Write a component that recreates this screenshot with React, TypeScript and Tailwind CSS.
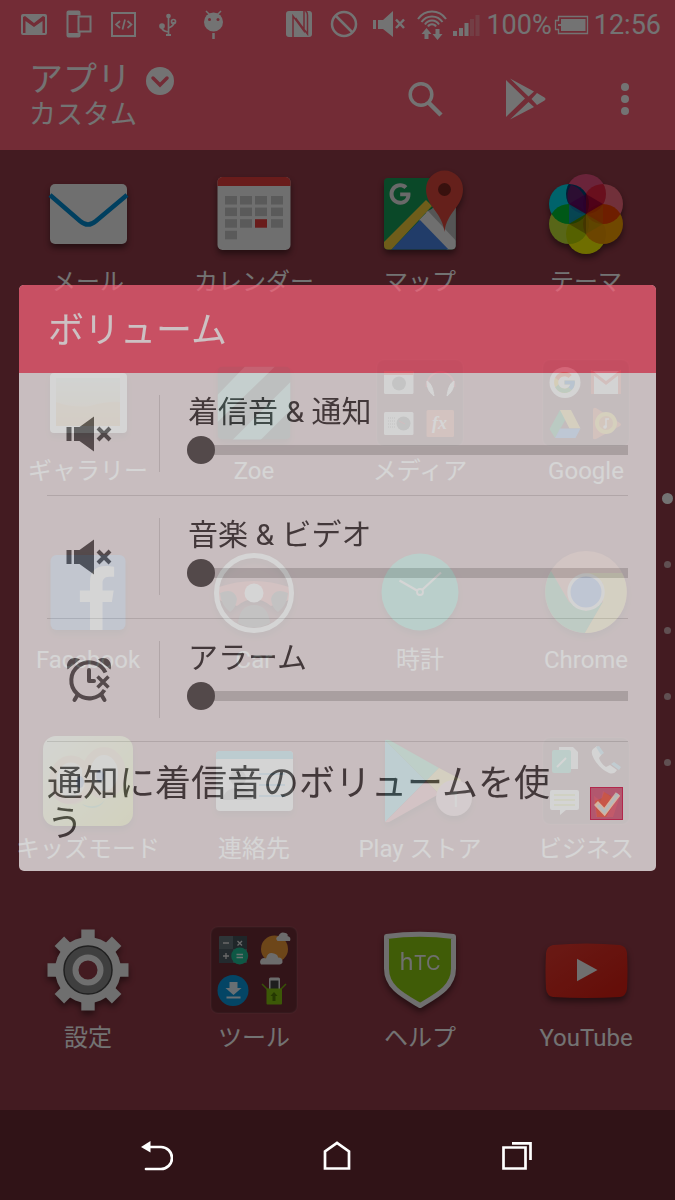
import { useState, type ReactNode } from "react";
import { FaFacebookF, FaGoogle } from "react-icons/fa";
import { FcGoogle } from "react-icons/fc";

const FONT = "font-[Roboto,'Noto_Sans_CJK_JP',sans-serif]";

/* ---------- status bar ---------- */

function StatusBar() {
  return (
    <div className="flex h-12 items-center pt-px pr-[14px] pl-5 text-white">
      <svg className="h-[30px] w-7 shrink-0" viewBox="0 0 28 30" fill="currentColor">
        <path fillRule="evenodd" d="M3 4h22a2 2 0 0 1 2 2v17a2 2 0 0 1-2 2H3a2 2 0 0 1-2-2V6a2 2 0 0 1 2-2Zm0 3v16h2.500V11l8.500 6 8.500-6v12H25V7l-2-1-9 7-9-7Z" />
      </svg>
      <svg className="ml-[17px] h-[30px] w-7 shrink-0" viewBox="0 0 28 30" fill="none" stroke="currentColor">
        <path d="M14.500 5.500v-3a1 1 0 0 0-1-1h-10a1 1 0 0 0-1 1v23a1 1 0 0 0 1 1h10a1 1 0 0 0 1-1V22" strokeWidth="2" />
        <path d="M2 3h13M2 25h13" strokeWidth="4" />
        <rect x="13.500" y="6.500" width="12" height="15" strokeWidth="2" />
      </svg>
      <svg className="ml-[17px] h-[30px] w-7 shrink-0" viewBox="0 0 28 30" fill="none" stroke="currentColor">
        <rect x="2" y="3" width="23" height="23" strokeWidth="2" />
        <path d="m10 11-4 3.500 4 3.500M17.500 11l4 3.500-4 3.500M15 9.500l-2.500 10" strokeWidth="1.700" />
      </svg>
      <svg className="ml-[17px] h-[30px] w-7 shrink-0" viewBox="0 0 28 30" fill="none" stroke="currentColor" strokeWidth="1.700">
        <path d="M13.500 5v20M6.500 16c0 4 3 5.500 7 6M13.500 18c3-1 5.500-3 5.500-6" />
        <circle cx="13.500" cy="6" r="1.500" fill="currentColor" />
        <circle cx="7" cy="16" r="2" fill="currentColor" />
        <circle cx="18.500" cy="11.500" r="2" />
        <path d="M11 25h5" strokeWidth="2" />
      </svg>
      <svg className="ml-[17px] h-[30px] w-7 shrink-0" viewBox="0 0 28 30">
        <path d="m6 1 4 4M21 1l-4 4" stroke="currentColor" strokeWidth="1.500" />
        <circle cx="13.500" cy="12" r="9.500" fill="currentColor" />
        <circle cx="9.500" cy="9.500" r="1.500" fill="#ff6278" />
        <circle cx="18" cy="9.500" r="1.500" fill="#ff6278" />
        <path d="M13.500 23v6" stroke="currentColor" strokeWidth="2.500" />
      </svg>

      <div className="ml-auto flex items-center">
        <svg className="h-[30px] w-7" viewBox="0 0 28 30">
          <rect x="1" y="1" width="26" height="26" rx="3" fill="currentColor" />
          <path d="M8 27V6l11 15V8M19 1v7M8 20v7M20.500 1q2 1 2 4v19L10.500 8" fill="none" stroke="#ff6278" strokeWidth="1.500" />
        </svg>
        <svg className="ml-[17px] h-[30px] w-7" viewBox="0 0 28 30" fill="none" stroke="currentColor" strokeWidth="2.500">
          <circle cx="14" cy="14" r="12" />
          <path d="m5.500 5.500 17 17" />
        </svg>
        <svg className="ml-[14px] h-[30px] w-[34px]" viewBox="0 0 34 30">
          <path fill="currentColor" d="M1 10h3v9H1ZM6 10h5L21 1v26L11 19H6Z" />
          <path d="m24 9.500 8 8.500m0-8.500L24 18" stroke="currentColor" strokeWidth="2.500" />
        </svg>
        <svg className="ml-[10px] h-[30px] w-8" viewBox="0 0 32 30" fill="none" stroke="currentColor" strokeWidth="2">
          <path d="M2 9C9-1 23-1 30 9M5.500 12c5-7.500 16-7.500 21 0M9 14.500c3-5.500 11-5.500 14 0M12 16.500c1.500-3 6.500-3 8 0" />
          <path fill="currentColor" stroke="none" d="m10.500 18 5 6H12.500v5h-4v-5H5.500ZM21.500 30l-5-6h3v-5h4v5h3Z" />
        </svg>
        <svg className="ml-1 h-[30px] w-7" viewBox="0 0 28 30" fill="currentColor">
          <path d="M1 21h4v5H1ZM7 18h4v8H7ZM12.500 13h4v13h-4Z" />
          <path opacity=".25" d="M18 9h4v17h-4ZM23.500 5h4v21h-4Z" />
        </svg>
        <span className="ml-[6px] text-[27px] leading-8">100%</span>
        <svg className="ml-[2px] h-[30px] w-9" viewBox="0 0 36 30">
          <path d="M4.500 6.500h29v17h-29v-4h-3v-9h3Z" fill="none" stroke="currentColor" strokeWidth="1.300" />
          <path d="M7 9h24.500v12H7v-5H4v-2h3Z" fill="currentColor" />
        </svg>
        <span className="ml-1 text-[27px] leading-8">12:56</span>
      </div>
    </div>
  );
}

function Header() {
  return (
    <header className="bg-[#ff6278] text-white">
      <StatusBar />
      <div className="flex h-[102px] items-center">
        <button type="button" className="ml-[29px] -mt-1 text-left">
          <span className="flex items-center gap-[15px]">
            <span className="text-[34px] leading-9">アプリ</span>
            <svg className="mt-1 size-7" viewBox="0 0 28 28">
              <circle cx="14" cy="14" r="14" fill="currentColor" />
              <path d="m7 11 7 7 7-7" fill="none" stroke="#ff6278" strokeWidth="3.500" strokeLinecap="round" />
            </svg>
          </span>
          <span className="block text-[27px] leading-9">カスタム</span>
        </button>
        <div className="ml-auto flex items-center">
          <button type="button" aria-label="検索" className="flex w-[100px] justify-center">
            <svg className="size-9" viewBox="0 0 36 36" fill="none" stroke="currentColor">
              <circle cx="14" cy="13.500" r="10.800" strokeWidth="3.500" />
              <path d="m22 22 12 12" strokeWidth="4.500" />
            </svg>
          </button>
          <button type="button" aria-label="Play ストア" className="flex w-[100px] justify-center">
            <svg className="size-[42px]" viewBox="-1 0 42 42" fill="currentColor">
              <path d="M1 2v37l19-18.500ZM5 .5l24 13-5.500 5ZM5 41.500l24-12.500-5.500-5ZM32 15l7.500 4.500q2 1.500 0 3L32 27l-5.500-6Z" />
            </svg>
          </button>
          <button type="button" aria-label="メニュー" className="flex w-[100px] justify-center">
            <svg className="h-9 w-2" viewBox="0 0 8 36" fill="currentColor">
              <circle cx="4" cy="6" r="4" />
              <circle cx="4" cy="18" r="4" />
              <circle cx="4" cy="30" r="4" />
            </svg>
          </button>
        </div>
      </div>
    </header>
  );
}

/* ---------- app icons, all on a 90x90 canvas ---------- */

function AppSvg({ children }: { children: ReactNode }) {
  return (
    <svg className="size-[90px] overflow-visible drop-shadow-[0_4px_3px_rgb(0_0_0_/_0.45)]" viewBox="0 0 90 90">
      {children}
    </svg>
  );
}

function FolderSvg({ children }: { children: ReactNode }) {
  return (
    <svg className="size-[90px]" viewBox="0 0 90 90">
      <rect x="2" y="2" width="86" height="86" rx="7" fill="#000" fillOpacity=".25" stroke="#fff" strokeOpacity=".06" strokeWidth="2" />
      {children}
    </svg>
  );
}

const MailIcon = () => (
  <AppSvg>
    <rect x="7" y="15" width="77" height="60" rx="5" fill="#f5f5f5" />
    <path d="m7 26 30 26q8 7 16 0l31-26" fill="none" stroke="#008cd3" strokeWidth="4.500" />
  </AppSvg>
);

const CalendarIcon = () => (
  <AppSvg>
    <rect x="8.500" y="8" width="73" height="73" rx="5" fill="#f5f5f5" />
    <path d="M8.500 17v-4a5 5 0 0 1 5-5h63a5 5 0 0 1 5 5v4Z" fill="#e83e3c" />
    {[0, 1, 2, 3].map((row) =>
      [16, 31, 46, 62].map((x, col) =>
        row === 3 && col > 0 ? null : (
          <rect key={`${row}-${col}`} x={x} y={27 + row * 11.6} width="12" height="8.500" fill={row === 2 && col === 2 ? "#e83e3c" : "#c8c8c8"} />
        )
      )
    )}
  </AppSvg>
);

const MapsIcon = () => (
  <AppSvg>
    <clipPath id="mapTile">
      <rect x="9" y="9" width="71.500" height="71.500" rx="4" />
    </clipPath>
    <g clipPath="url(#mapTile)">
      <rect x="9" y="9" width="72" height="72" fill="#18a05a" />
      <path d="M45 52 81 16v65Z" fill="#dcdcdc" />
      <path d="M81 81V30L50 43Z" fill="#bdbdbd" />
      <path d="m44 51 9-9 30 32v10h-8Z" fill="#f5f5f5" />
      <path d="m15 82 30-31 30 31Z" fill="#4a86e8" />
      <path d="m7 75 44-44 6 6-42 45H7Z" fill="#f5cf3a" />
    </g>
    <FaGoogle x={14} y={14} size={22} color="#e8e8e8" />
    <path d="M69.500 63c-2-20-18.500-25-18.500-43a18.500 18.500 0 0 1 37 0c0 18-16.500 23-18.500 43Z" fill="#e0483c" />
    <circle cx="69.500" cy="20.500" r="6.500" fill="#7d2620" />
  </AppSvg>
);

const ThemeIcon = () => (
  <AppSvg>
    <g className="isolate">
      {[
        [28, 55, "#c3e236"],
        [45, 65, "#f6f400"],
        [62, 55, "#f8a000"],
        [62, 35, "#fb6b80"],
        [45, 25, "#ec5080"],
        [28, 35, "#00dcee"],
      ].map(([cx, cy, fill]) => (
        <circle key={`${cx}-${cy}`} className="mix-blend-multiply" cx={cx} cy={cy} r="20" fill={fill as string} />
      ))}
      {/* left overlap of the top petal */}
      <path d="M30 16a20 20 0 0 1 15 19v10L28 35a20 20 0 0 1 2-19Z" fill="#b4006c" opacity=".55" />
      <path d="M45 45V25L28 35Z" fill="#60006a" opacity=".7" />
      <path d="M45 45V25l17 10Z" fill="#a00034" opacity=".8" />
      <path d="M45 45 28 35v20Z" fill="#1590d8" opacity=".8" />
      <path d="m45 45 17-10v20Z" fill="#e06800" opacity=".6" />
      <path d="M45 45v20L28 55Z" fill="#806c00" opacity=".6" />
      <path d="M45 45v20l17-10Z" fill="#c89a00" opacity=".7" />
    </g>
  </AppSvg>
);

const GalleryIcon = () => (
  <AppSvg>
    <linearGradient id="dune" x2="0" y2="1">
      <stop stopColor="#e0eee0" />
      <stop offset="1" stopColor="#f2c48a" />
    </linearGradient>
    <rect x="7" y="15" width="77" height="60" rx="4" fill="#fff" />
    <rect x="13" y="20" width="64" height="48" fill="url(#dune)" />
    <path d="M13 44q16 6 34 4 18-5 30-4v24H13Z" fill="#f2b46c" opacity=".5" />
  </AppSvg>
);

const ZoeIcon = () => (
  <AppSvg>
    <clipPath id="zoeTile">
      <rect x="8.500" y="8.500" width="73" height="73" rx="5" />
    </clipPath>
    <g clipPath="url(#zoeTile)">
      <rect x="8.500" y="8.500" width="73" height="73" fill="#3c4c4a" />
      <path d="M36 8.500h30L8.500 64V37ZM81.500 24v28l-30 30h-28Z" fill="#78d0c0" />
    </g>
  </AppSvg>
);

const MediaIcon = () => (
  <FolderSvg>
    <rect x="9" y="13" width="29.500" height="23" rx="1.500" fill="#f2f2f2" />
    <path d="M9 13h29.500v4H9Z" fill="#f04030" />
    <circle cx="24" cy="25.500" r="7" fill="#777" />
    <path d="M51.500 29a14 15 0 1 1 28 0" fill="none" stroke="#e83248" strokeWidth="2" />
    <path d="M52 23c0 7 2 11 7 15-1-6-2-12-7-15ZM79 23c0 7-2 11-7 15 1-6 2-12 7-15Z" fill="#fff" stroke="#fff" strokeWidth="1" />
    <rect x="9" y="54" width="29.500" height="23" rx="1.500" fill="#f2f2f2" />
    <path d="M13 60h7m-7 3h7m-7 3h7m-7 3h7" stroke="#666" strokeDasharray="1 1" />
    <circle cx="28.500" cy="65.500" r="7" fill="#666" />
    <path d="m24 63 6 3" stroke="#e83248" />
    <rect x="51.500" y="52" width="27.500" height="27" rx="1.500" fill="#f06a50" />
    <text x="57" y="71" fontSize="18" fontStyle="italic" fontWeight="bold" fontFamily="Liberation Serif, serif" fill="#fff">fx</text>
  </FolderSvg>
);

const GoogleIcon = () => (
  <FolderSvg>
    <circle cx="24" cy="24.500" r="15.500" fill="#f5f5f5" />
    <FcGoogle x={11} y={12} size={25} />
    <rect x="50" y="13" width="30" height="23" rx="2" fill="#f0f0f0" />
    <path d="M51.500 36V14.500L65 25l13.500-10.500V36" fill="none" stroke="#e8483c" strokeWidth="3" />
    <path d="M19 52h11L14 80l-5.500-9Z" fill="#1da362" />
    <path d="M19 52h11l9.500 18.500H28.500Z" fill="#fcd04b" />
    <path d="M14 80l5-9.500h20.500l-5 9.500Z" fill="#4688f4" />
    <path d="M52 52v28q0 2 3 1l24-13q2-1.500 0-3L55 50q-3-1-3 2Z" fill="#f0603c" />
    <circle cx="65" cy="65" r="11" fill="#ffd23c" />
    <circle cx="65" cy="65" r="7" fill="#f0803c" />
    <path d="M65 69v-8h3" fill="none" stroke="#fff" strokeWidth="1.500" />
    <circle cx="64" cy="69" r="1.800" fill="#fff" />
  </FolderSvg>
);

const FacebookIcon = () => (
  <AppSvg>
    <rect x="7.500" y="8" width="75" height="75" rx="6" fill="#5f80d0" />
    <FaFacebookF x={22} y={19} size={64} color="#fff" />
  </AppSvg>
);

const CarIcon = () => (
  <AppSvg>
    <path d="M10 40q35-12 70 0v13L62 59q-17-14-34 0L10 53Z" fill="#f06060" />
    <path d="M11 46q14-6 17 6-1 9-7 13Q12 58 11 46ZM79 46q-14-6-17 6 1 9 7 13 9-7 10-19Z" fill="#6c6464" />
    <path d="M29 76q2-18 16-18t16 18q-16 9-32 0Z" fill="#6c6464" />
    <circle cx="45" cy="46" r="37.500" fill="none" stroke="#fff" strokeWidth="5" />
    <circle cx="45" cy="46" r="9.500" fill="#fff" />
  </AppSvg>
);

const ClockIcon = () => (
  <AppSvg>
    <circle cx="45" cy="45" r="38.500" fill="#25d0a8" />
    <path d="M24.500 33.500 42 43.500M47 43l19-17.500" stroke="#fff" strokeWidth="2.200" />
    <circle cx="45" cy="45" r="3" fill="none" stroke="#fff" strokeWidth="1.800" />
  </AppSvg>
);

const ChromeIcon = () => (
  <AppSvg>
    <circle cx="45" cy="45" r="41" fill="#e8786c" />
    <path d="M10 24A41 41 0 0 0 44 86l18-31-17 9-17-9Z" fill="#40b070" />
    <path d="M44 86a41 41 0 0 0 37-60H45l17 10v19Z" fill="#f5d860" />
    <circle cx="45" cy="45" r="18.700" fill="#f2f2f2" />
    <circle cx="45" cy="45" r="15.500" fill="#4c80ea" />
  </AppSvg>
);

const KidsIcon = () => (
  <AppSvg>
    <linearGradient id="kids" x2="1" y2="1">
      <stop stopColor="#f2f8e0" />
      <stop offset=".6" stopColor="#e8ec80" />
      <stop offset="1" stopColor="#e0de40" />
    </linearGradient>
    <rect width="90" height="90" rx="13" fill="url(#kids)" />
    <ellipse cx="28" cy="44" rx="18" ry="21" fill="#f8f4e8" stroke="#f0c890" strokeWidth="7" />
    <ellipse cx="61" cy="37" rx="18" ry="22" fill="#f8f4e8" stroke="#f0c890" strokeWidth="8" />
    <ellipse cx="37" cy="46" rx="4" ry="6" fill="#6088d0" />
    <ellipse cx="57" cy="40" rx="4" ry="6" fill="#6088d0" />
    <path d="M8 52q16 20 34 4l-4 8q-16 8-26-2Z" fill="#f0a890" />
    <path d="M39 68q14 6 23-4-5 8-12 8t-11-4Z" fill="#80d098" />
  </AppSvg>
);

const ContactsIcon = () => (
  <AppSvg>
    <rect x="7" y="15" width="77" height="60" rx="4" fill="#f5f5f5" />
    <path d="M7 23v-4a4 4 0 0 1 4-4h69a4 4 0 0 1 4 4v4Z" fill="#34b4d8" />
    <circle cx="29" cy="42" r="8" fill="#999" />
    <path d="M14 64q1-12 15-12t14 12Z" fill="#999" />
    <path d="M50 38h26M50 49h26M50 60h26" stroke="#68b8e8" strokeWidth="2" />
  </AppSvg>
);

const PlayStoreIcon = () => (
  <AppSvg>
    <path d="M10 4v82l41-41Z" fill="#40c8e0" />
    <path d="M10 4q3-1 6 1l48 27-13 13Z" fill="#40d090" />
    <path d="m64 32 21 11q2 2 0 4L64 58 51 45Z" fill="#f4d050" />
    <path d="M10 86q3 1 6-1l48-27-13-13Z" fill="#f06878" />
    <circle cx="79" cy="62" r="18" fill="#f5b8c0" />
    <text x="74" y="71" fontSize="22" fill="#fff">1</text>
  </AppSvg>
);

const BusinessIcon = () => (
  <FolderSvg>
    <path d="M18 11h14l5 5v17H18Z" fill="#f2f2f2" />
    <rect x="11" y="14" width="19" height="23" rx="2" fill="#38c8a0" />
    <path d="m16 31 9-9" stroke="#fff" strokeWidth="2" />
    <path d="M52 13q-3 3 1 10 6 10 15 14 5 2 8-3l-7-5-4 2q-5-3-7-9l3-4-5-8Z" fill="#f5f5f5" />
    <path d="m55 11 3-1 5 7-3 2ZM70 28l3-2 7 5-2 3Z" fill="#58b8e0" />
    <path d="M11 54h25q2 0 2 2v16q0 2-2 2H25l-6 5v-5h-8q-2 0-2-2V56q0-2 2-2Z" fill="#f5f5f5" />
    <path d="M13 59h21M13 64h21M13 69h21" stroke="#c8d040" strokeWidth="1.500" />
    <path d="m53 60 7 5 2-10 8 6 10-4-8 24H55Z" fill="#f04818" />
  </FolderSvg>
);

const SettingsIcon = () => (
  <AppSvg>
    <g fill="#f5f5f5">
      {[0, 45, 90, 135].map((deg) => (
        <path key={deg} transform={`rotate(${deg} 45 45)`} d="M38.300 4.500h13.400v81H38.300Z" />
      ))}
      <circle cx="45" cy="45" r="33" />
    </g>
    <circle cx="45" cy="45" r="24" fill="#8c8c8c" stroke="#484848" strokeWidth="1.500" />
    <circle cx="45" cy="45" r="12.500" fill="#953c49" stroke="#f5f5f5" strokeWidth="6" />
  </AppSvg>
);

const ToolsIcon = () => (
  <FolderSvg>
    <rect x="10" y="11" width="28" height="27" rx="1" fill="#66757d" />
    <path d="M24 11h14v13H24Z" fill="#46545c" />
    <path d="M10 24h14v14H10Z" fill="#4e5d66" />
    <path d="M14 18h6M14 31h6m-3-3v6M28.500 16l4.500 4.500m0-4.500-4.500 4.500" stroke="#e8e8e8" strokeWidth="1.300" />
    <circle cx="30.700" cy="31" r="8.500" fill="#1fc49a" />
    <path d="M27.500 29.500H34M27.500 32.500H34" stroke="#e8fff8" strokeWidth="1.300" />
    <circle cx="65.500" cy="24" r="13.500" fill="#f29b38" />
    <path d="M52 39.500a4 4 0 0 1 1-6q2-1 4 0 2-7 8-5 4 1 4 4 5 0 4.500 5-1 2-3 2ZM68.500 16q-3-3 1-5 2-5 7-3 3 1 2 3 4 1 2.500 5Z" fill="#f0f0f0" />
    <circle cx="24" cy="65.500" r="15.500" fill="#0a9ae0" />
    <path d="M20.500 57h8v6h4L24.500 70l-8-7h4ZM17.500 71.500h14v2h-14Z" fill="#e8f5ff" />
    <rect x="60" y="52.500" width="11" height="18" rx="1.500" fill="#eee" />
    <path d="M61.500 55.500h8v12h-8Z" fill="#444" />
    <path d="m53 59 6 6M77 59l-6 6" stroke="#7bb512" strokeWidth="1.500" />
    <rect x="57.500" y="63.500" width="15.500" height="16" rx="1" fill="#86c410" />
    <path d="m65 67 3.500 4h-2v5h-3v-5h-2Z" fill="#527c06" />
  </FolderSvg>
);

const HelpIcon = () => (
  <AppSvg>
    <path d="M11.500 11.500q33-4.500 67 0v32c0 19-17 27-33.500 37C28 70.500 11.500 62.500 11.500 43.500Z" fill="#8fcc10" stroke="#f5f5f5" strokeWidth="5" strokeLinejoin="round" />
    <text x="45" y="45" textAnchor="middle" fontFamily="Inter, sans-serif" fontWeight="400" fill="#f5f5f5">
      <tspan fontSize="24">h</tspan>
      <tspan fontSize="20">TC</tspan>
    </text>
  </AppSvg>
);

const YouTubeIcon = () => (
  <AppSvg>
    <linearGradient id="tube" x2="1" y2="1">
      <stop stopColor="#ea3a30" />
      <stop offset="1" stopColor="#de1c10" />
    </linearGradient>
    <path d="M12 20q33-3 67 0 6 1 7 8 1 18 0 36-1 7-7 8-34 2-67 0-6-1-7-8-1-18 0-36 1-7 7-8Z" fill="url(#tube)" />
    <path d="M36 33.700v22.500L56.500 45Z" fill="#f5f5f5" />
  </AppSvg>
);

const APPS = [
  { name: "メール", icon: MailIcon },
  { name: "カレンダー", icon: CalendarIcon },
  { name: "マップ", icon: MapsIcon },
  { name: "テーマ", icon: ThemeIcon },
  { name: "ギャラリー", icon: GalleryIcon },
  { name: "Zoe", icon: ZoeIcon },
  { name: "メディア", icon: MediaIcon },
  { name: "Google", icon: GoogleIcon },
  { name: "Facebook", icon: FacebookIcon },
  { name: "Car", icon: CarIcon },
  { name: "時計", icon: ClockIcon },
  { name: "Chrome", icon: ChromeIcon },
  { name: "キッズモード", icon: KidsIcon },
  { name: "連絡先", icon: ContactsIcon },
  { name: "Play ストア", icon: PlayStoreIcon },
  { name: "ビジネス", icon: BusinessIcon },
  { name: "設定", icon: SettingsIcon },
  { name: "ツール", icon: ToolsIcon },
  { name: "ヘルプ", icon: HelpIcon },
  { name: "YouTube", icon: YouTubeIcon },
];

function AppGrid() {
  return (
    <main className="relative flex-1 bg-[#953c49] pt-[19px] pr-[6px] pb-[57px] pl-[5px]">
      <div className="grid grid-cols-4 gap-y-[61px]">
        {APPS.map(({ name, icon: Icon }) => (
          <button key={name} type="button" className="flex flex-col items-center gap-2 text-white">
            <Icon />
            <span className="text-2xl leading-[30px] whitespace-nowrap">{name}</span>
          </button>
        ))}
      </div>
      {/* page indicator */}
      <div className="absolute inset-y-0 right-[2px] flex w-3 flex-col items-center justify-center gap-[54px]">
        {[0, 1, 2, 3, 4].map((page) => (
          <span key={page} className="flex size-3 items-center justify-center">
            <span className={page === 0 ? "size-[11px] rounded-full bg-white" : "size-[7px] rounded-full bg-white/60"} />
          </span>
        ))}
      </div>
    </main>
  );
}

/* ---------- volume dialog ---------- */

const MuteIcon = () => (
  <svg className="h-9 w-[46px] text-[#5c5c5c]" viewBox="0 0 46 36">
    <path fill="currentColor" d="M.5 11h5v14h-5ZM8 11h5.500L28 .5v35L13.500 25H8Z" />
    <path d="m32 12 12 12m0-12L32 24" stroke="currentColor" strokeWidth="4" />
  </svg>
);

const AlarmOffIcon = () => (
  <svg className="size-[46px] text-[#5c5c5c]" viewBox="0 0 46 46" fill="none" stroke="currentColor">
    <path d="M39.500 15.500A18 18 0 1 0 38.500 33" strokeWidth="4" />
    <path d="M23 13v11h5" strokeWidth="4" strokeLinecap="round" strokeLinejoin="round" />
    <path d="m11.500 38-3 5M35.500 38l3 5" strokeWidth="4" strokeLinecap="round" />
    <path d="m31.500 19.500 11 11m0-11-11 11" strokeWidth="3.500" />
    <path d="M1.500 12.500C-1 4 6-2 14 2.500ZM44.500 12.500C47 4 40-2 32 2.500Z" fill="currentColor" stroke="none" />
  </svg>
);

const CHANNELS = [
  { id: "ring", label: "着信音 & 通知", icon: MuteIcon },
  { id: "media", label: "音楽 & ビデオ", icon: MuteIcon },
  { id: "alarm", label: "アラーム", icon: AlarmOffIcon },
];

function VolumeDialog() {
  const [levels, setLevels] = useState<Record<string, number>>({ ring: 0, media: 0, alarm: 0 });
  const [linked, setLinked] = useState(true);

  return (
    <section
      role="dialog"
      aria-labelledby="volume-title"
      className="mx-[19px] w-full overflow-hidden rounded-[5px] bg-[#fafafa] text-[#444] opacity-[0.73]"
    >
      <h1 id="volume-title" className="flex h-[88px] items-center bg-[#fa647c] pt-1 pl-[29px] text-4xl text-white">
        ボリューム
      </h1>
      <div className="px-7">
        {CHANNELS.map(({ id, label, icon: Icon }) => (
          <div key={id} className="flex h-[123px] items-center border-b border-[#dadada]">
            <div className="flex w-[84px] justify-center">
              <Icon />
            </div>
            <div className="ml-7 h-[77px] w-px bg-[#dadada]" />
            <div className="ml-[27px] flex flex-1 flex-col pb-3">
              <label htmlFor={id} className="pl-px text-[30px] leading-10">
                {label}
              </label>
              <input
                id={id}
                type="range"
                min="0"
                max="100"
                value={levels[id]}
                onChange={(e) => setLevels({ ...levels, [id]: Number(e.target.value) })}
                className="mt-1 h-7 w-full appearance-none bg-transparent [&::-webkit-slider-runnable-track]:h-[10px] [&::-webkit-slider-runnable-track]:rounded-l-full [&::-webkit-slider-runnable-track]:bg-[#d0d0d0] [&::-webkit-slider-thumb]:-mt-[9px] [&::-webkit-slider-thumb]:size-7 [&::-webkit-slider-thumb]:appearance-none [&::-webkit-slider-thumb]:rounded-full [&::-webkit-slider-thumb]:bg-[#5a5a5a]"
              />
            </div>
          </div>
        ))}
        <div className="flex items-center justify-between pt-[22px] pr-[5px] pb-[27px]">
          <label htmlFor="link-volume" className="w-[520px] text-4xl leading-10">
            通知に着信音のボリュームを使う
          </label>
          <span className="relative flex">
            <input
              id="link-volume"
              type="checkbox"
              checked={linked}
              onChange={(e) => setLinked(e.target.checked)}
              className="size-[33px] appearance-none border border-[#e03060] bg-[#e0809c] checked:bg-[#e2708e]"
            />
            {linked && (
              <svg className="pointer-events-none absolute inset-0 size-[33px]" viewBox="0 0 33 33" fill="none">
                <path d="m5 14 7-3 2-6 7 4 3 8-8 13H7Z" fill="#f0684c" opacity=".7" />
                <path d="m6 16 8.500 9L28 7" stroke="#fde8d4" strokeWidth="5.500" />
                <path d="m8 18 6.500 7L28 7" stroke="#d4f2fc" strokeWidth="3" />
              </svg>
            )}
          </span>
        </div>
      </div>
    </section>
  );
}

function NavBar() {
  return (
    <nav className="flex h-[90px] items-center justify-center bg-[#301317] pt-px pr-px text-white">
      <button type="button" aria-label="戻る" className="flex w-[180px] justify-center">
        <svg className="size-8" viewBox="0 0 32 32" fill="none" stroke="currentColor" strokeWidth="2.700">
          <path d="M8 7h12a11 11 0 0 1 0 22H5" strokeLinecap="round" />
          <path d="M0 7 9.500 1v11.500Z" fill="currentColor" stroke="none" />
        </svg>
      </button>
      <button type="button" aria-label="ホーム" className="flex w-[180px] justify-center">
        <svg className="size-8" viewBox="0 0 32 32" fill="none" stroke="currentColor" strokeWidth="2.700">
          <path d="M4 28.500V11.500L16 3l12 8.500v17Z" />
        </svg>
      </button>
      <button type="button" aria-label="最近使ったアプリ" className="flex w-[180px] justify-center">
        <svg className="size-8" viewBox="0 0 32 32" fill="none" stroke="currentColor" strokeWidth="2.700">
          <path d="M2.500 7.500h22v21h-22ZM11 3.300h18.500V20" />
        </svg>
      </button>
    </nav>
  );
}

export default function App() {
  return (
    <div className={`flex min-h-screen flex-col ${FONT}`}>
      <div className="relative flex flex-1 flex-col">
        <Header />
        <AppGrid />
        <div className="absolute inset-0 flex items-center bg-black/55 pt-[45px]">
          <VolumeDialog />
        </div>
      </div>
      <NavBar />
    </div>
  );
}
